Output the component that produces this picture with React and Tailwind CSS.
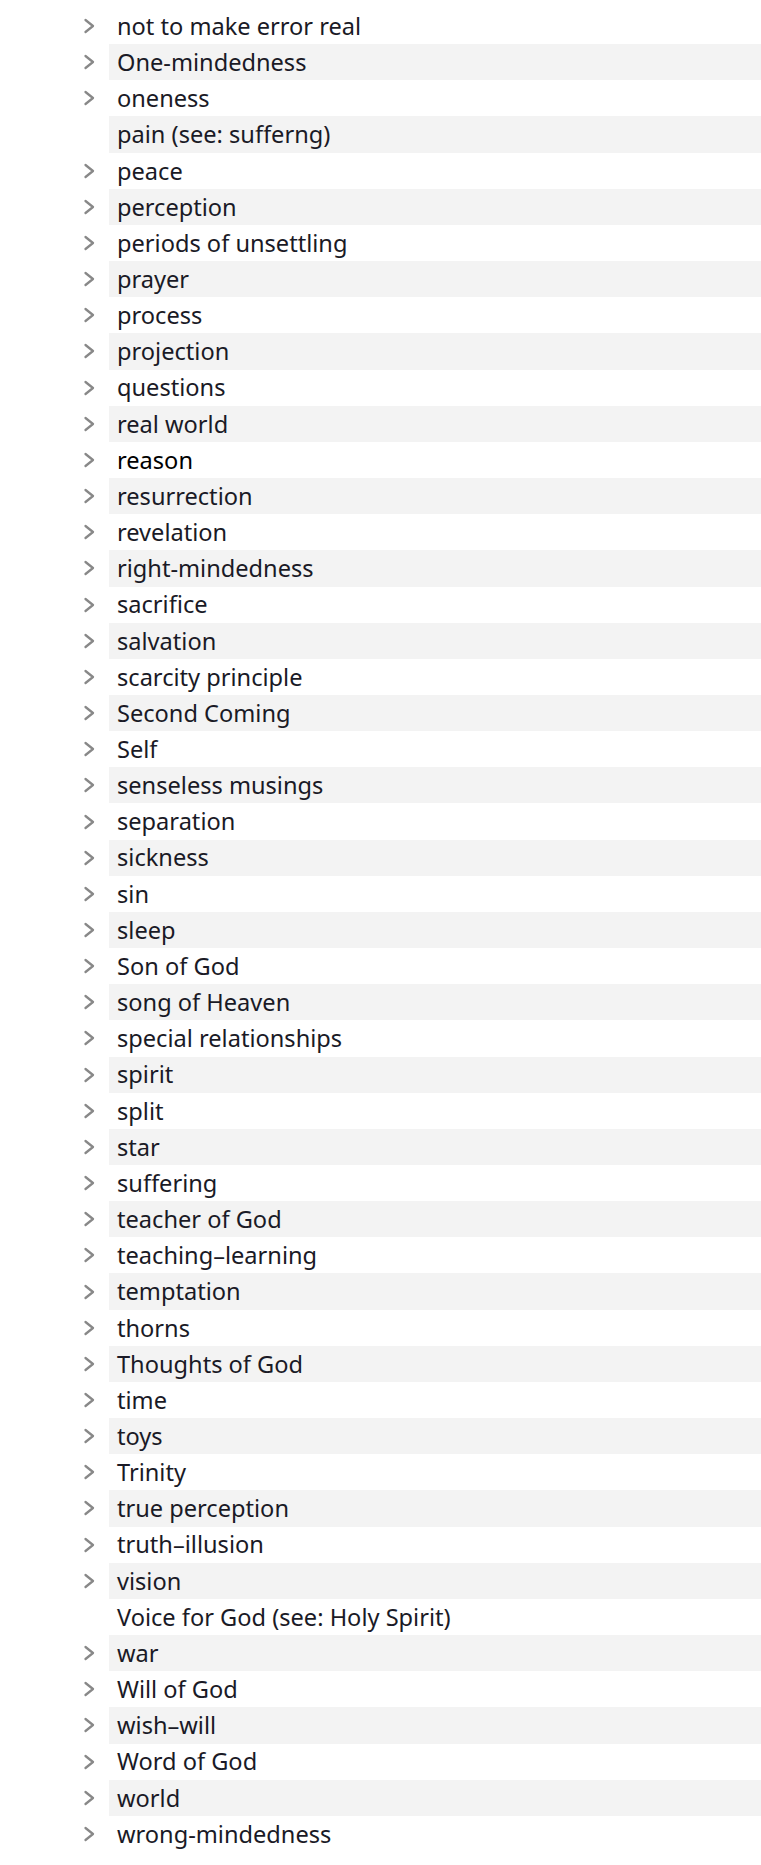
import React from "react";

// Index entries; `leaf` entries have no children and so no expand chevron.
const topics = [
	{ label: "not to make error real" },
	{ label: "One-mindedness" },
	{ label: "oneness" },
	{ label: "pain (see: sufferng)", leaf: true },
	{ label: "peace" },
	{ label: "perception" },
	{ label: "periods of unsettling" },
	{ label: "prayer" },
	{ label: "process" },
	{ label: "projection" },
	{ label: "questions" },
	{ label: "real world" },
	{ label: "reason", plain: true },
	{ label: "resurrection" },
	{ label: "revelation" },
	{ label: "right-mindedness" },
	{ label: "sacrifice" },
	{ label: "salvation" },
	{ label: "scarcity principle" },
	{ label: "Second Coming" },
	{ label: "Self" },
	{ label: "senseless musings" },
	{ label: "separation" },
	{ label: "sickness" },
	{ label: "sin" },
	{ label: "sleep" },
	{ label: "Son of God" },
	{ label: "song of Heaven" },
	{ label: "special relationships" },
	{ label: "spirit" },
	{ label: "split" },
	{ label: "star" },
	{ label: "suffering" },
	{ label: "teacher of God" },
	{ label: "teaching–learning" },
	{ label: "temptation" },
	{ label: "thorns" },
	{ label: "Thoughts of God" },
	{ label: "time" },
	{ label: "toys" },
	{ label: "Trinity" },
	{ label: "true perception" },
	{ label: "truth–illusion" },
	{ label: "vision" },
	{ label: "Voice for God (see: Holy Spirit)", leaf: true },
	{ label: "war" },
	{ label: "Will of God" },
	{ label: "wish–will" },
	{ label: "Word of God" },
	{ label: "world" },
	{ label: "wrong-mindedness" },
];

const Chevron = () => (
	<svg width="14" height="18" viewBox="0 0 14 18" fill="none">
		<path
			d="M3.5 3 L11 9 L3.5 15"
			stroke="#888888"
			strokeWidth="2.3"
			strokeLinecap="round"
			strokeLinejoin="round"
		/>
	</svg>
);

const App = () => {
	return (
		<div className="min-h-screen bg-white pt-2 font-['Noto_Sans',sans-serif]">
			{topics.map((topic, i) => (
				<div key={topic.label} className="flex h-[36.16px] items-center">
					<div className="flex w-[109px] shrink-0 justify-end pr-[13px]">
						{!topic.leaf && <Chevron />}
					</div>
					<div
						className={`flex h-full flex-1 items-center pl-2 pt-px text-[23.6px] ${
							i % 2 === 1 ? "bg-[#f3f3f3]" : ""
						} ${topic.plain ? "text-black" : "text-[#1a1a26]"}`}
					>
						{topic.label}
					</div>
				</div>
			))}
		</div>
	);
};

export default App;
